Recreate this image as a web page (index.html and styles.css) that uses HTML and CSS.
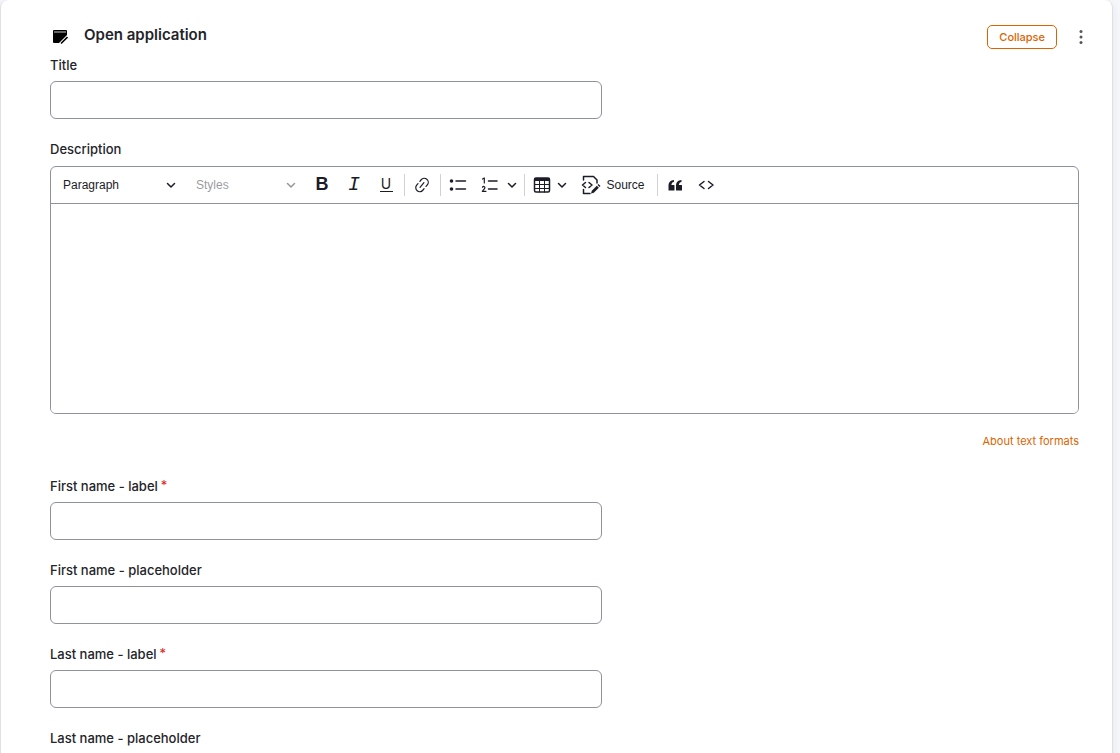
FILE: index.html
```html
<!DOCTYPE html>
<html lang="en">
<head>
<meta charset="utf-8">
<meta name="viewport" content="width=device-width, initial-scale=1">
<title>Open application</title>
<link rel="stylesheet" href="styles.css">
</head>
<body>
<main class="page">
  <form class="card">
    <header class="card-header">
      <svg class="card-icon" width="16" height="16" viewBox="0 0 16 16" aria-hidden="true">
        <path d="M1 2Q1 1 2 1H14Q15 1 15 2V6L7 14H2Q1 14 1 13Z" fill="#000"/>
        <path d="M2 3H14" stroke="#ccc" stroke-width="1"/>
        <path d="M9 14.500L15.500 8" stroke="#000" stroke-width="1.600"/>
      </svg>
      <h1 class="card-title">Open application</h1>
      <button class="collapse" type="button">Collapse</button>
      <button class="more" type="button" aria-label="More actions">
        <svg width="16" height="16" viewBox="0 0 16 16" fill="#55565b"><circle cx="8" cy="2.500" r="1.500"/><circle cx="8" cy="8" r="1.500"/><circle cx="8" cy="13.500" r="1.500"/></svg>
      </button>
    </header>

    <div class="field">
      <label class="label" for="title">Title</label>
      <input class="input" id="title" type="text">
    </div>

    <div class="field field-editor">
      <label class="label" for="description">Description</label>
      <div class="editor">
        <div class="toolbar" role="toolbar" aria-label="Editor toolbar">
          <div class="picker">
            <select class="picker-select picker-heading" aria-label="Heading"><option>Paragraph</option></select>
            <svg class="picker-arrow" width="10" height="10" viewBox="0 0 10 10"><path class="line" d="M1.500 3.500L5 7L8.500 3.500"/></svg>
          </div>
          <div class="picker picker-disabled">
            <select class="picker-select picker-styles" aria-label="Styles" disabled><option>Styles</option></select>
            <svg class="picker-arrow" width="10" height="10" viewBox="0 0 10 10"><path class="line" d="M1.500 3.500L5 7L8.500 3.500"/></svg>
          </div>
          <button class="tool tool-bold" type="button" aria-label="Bold">B</button>
          <button class="tool tool-italic" type="button" aria-label="Italic">I</button>
          <button class="tool" type="button" aria-label="Underline"><span class="tool-underline">U</span></button>
          <span class="divider"></span>
          <button class="tool" type="button" aria-label="Link">
            <svg width="18" height="18" viewBox="0 0 18 18"><g class="line thin" transform="rotate(-50 9 9)"><path d="M7.500 5H5.500a4 4 0 0 0 0 8H7.500M10.500 5h2a4 4 0 0 1 0 8h-2M6 9h6"/></g></svg>
          </button>
          <span class="divider"></span>
          <button class="tool" type="button" aria-label="Bulleted list">
            <svg width="18" height="18" viewBox="0 0 18 18"><g fill="#1b1c28"><circle cx="2.500" cy="5" r="1.800"/><circle cx="2.500" cy="13" r="1.800"/></g><path class="line" d="M7 5h9.500M7 13h9.500"/></svg>
          </button>
          <div class="split">
            <button class="tool" type="button" aria-label="Numbered list">
              <svg width="18" height="18" viewBox="0 0 18 18"><path class="line thin" d="M1.500 3L3.300 2V7M1.500 11.300Q2 10.300 3 10.500Q4.500 11 3.500 12.700L1.300 15.300H5"/><path class="line" d="M7.500 5H16M7.500 13H16"/></svg>
            </button>
            <button class="split-arrow" type="button" aria-label="Numbered list options"><svg width="10" height="10" viewBox="0 0 10 10"><path class="line" d="M1.500 3.500L5 7L8.500 3.500"/></svg></button>
          </div>
          <span class="divider"></span>
          <button class="tool tool-table" type="button" aria-label="Insert table">
            <svg width="18" height="18" viewBox="0 0 18 18"><rect x="1.500" y="2" width="15" height="14" rx="1.500" class="line"/><path d="M1.500 2h15v3h-15z" fill="#1b1c28"/><path class="line hair" d="M6.500 5v11M11.500 5v11M2 8.500h14M2 12.500h14"/></svg>
            <svg width="10" height="10" viewBox="0 0 10 10"><path class="line" d="M1.500 3.500L5 7L8.500 3.500"/></svg>
          </button>
          <button class="tool tool-source" type="button">
            <svg width="20" height="20" viewBox="0 0 20 20"><path class="line" d="M2.500 5V1.500H12.500L16 5V8M2.500 14.500V18.500H9"/><path class="line" d="M4.500 7.500L1.500 10L4.500 12.500M8 7.500L11 10L8 12.500"/><path d="M10 18.500l.800-2.800 5-5 2 2-5 5z" fill="#1b1c28"/><path d="M16.500 10l1-1 2 2-1 1z" fill="#1b1c28"/></svg>
            <span>Source</span>
          </button>
          <span class="divider"></span>
          <button class="tool" type="button" aria-label="Block quote">
            <svg width="18" height="18" viewBox="0 0 18 18" fill="#1b1c28"><path id="quote" d="M8 4C4.500 4.200 2.500 6.500 2.500 10V14q0 .500 .500 .500H8q.500 0 .500-.500V9.500Q8.500 9 8 9H5.300Q5.500 6.200 8 5.700Z"/><use href="#quote" x="7.500"/></svg>
          </button>
          <button class="tool" type="button" aria-label="Code">
            <svg width="18" height="18" viewBox="0 0 18 18"><path class="line" d="M6 5.500L1.500 9L6 12.500M10.500 5.500L15 9L10.500 12.500"/></svg>
          </button>
        </div>
        <textarea class="editor-area" id="description"></textarea>
      </div>
      <a class="formats" href="#formats">About text formats</a>
    </div>

    <div class="field">
      <label class="label required" for="first-label">First name - label</label>
      <input class="input" id="first-label" type="text" required>
    </div>
    <div class="field">
      <label class="label" for="first-placeholder">First name - placeholder</label>
      <input class="input" id="first-placeholder" type="text">
    </div>
    <div class="field">
      <label class="label required" for="last-label">Last name - label</label>
      <input class="input" id="last-label" type="text" required>
    </div>
    <div class="field">
      <label class="label" for="last-placeholder">Last name - placeholder</label>
      <input class="input" id="last-placeholder" type="text">
    </div>
  </form>
</main>
</body>
</html>
```
FILE: styles.css
```css
* { box-sizing: border-box; }

body {
  margin: 0;
  background: #f6f7fb;
  color: #232429;
  font-family: Inter, "Liberation Sans", sans-serif;
}

button, input, select, textarea { font: inherit; color: inherit; }

.page {
  height: 100vh;
  overflow: hidden;
  padding-right: 7px;
}

.card {
  display: flex;
  flex-direction: column;
  gap: 20px;
  padding: 25px 33px 40px 49px;
  background: #fff;
  border: 1px solid #e0e0e4;
  border-top: 0;
  border-radius: 8px;
  box-shadow: 0 2px 8px rgba(34, 35, 48, 0.08);
}

.card-header {
  display: flex;
  align-items: flex-start;
  height: 30px;
  margin-bottom: -20px;
}

.card-icon { margin: 4px 16px 0 2px; }

.card-title {
  flex: 1;
  margin: 0;
  font-size: 15px;
  line-height: 20px;
  font-weight: 600;
}

.collapse {
  height: 24px;
  padding: 0 11px;
  background: #fff;
  border: 1px solid #d96500;
  border-radius: 5px;
  color: #d96500;
  font-size: 11px;
  font-weight: 500;
}

.more {
  display: grid;
  place-items: center;
  width: 24px;
  height: 24px;
  margin: 0 -14px 0 12px;
  padding: 0;
  background: none;
  border: 0;
}

.field {
  display: flex;
  flex-direction: column;
  gap: 6px;
}

.label {
  align-self: flex-start;
  font-size: 13px;
  line-height: 20px;
  font-weight: 500;
}

.required::after {
  content: "*";
  margin-left: 3px;
  color: #d72222;
  font-weight: 400;
  line-height: 1;
  vertical-align: 1px;
}

.input {
  width: 100%;
  max-width: 552px;
  height: 38px;
  padding: 0 15px;
  background: #fff;
  border: 1px solid #8e929c;
  border-radius: 6px;
}

.field-editor { gap: 7px; margin-bottom: 7px; }

.editor {
  overflow: hidden;
  border: 1px solid #8e929c;
  border-radius: 6px;
}

.toolbar {
  display: flex;
  align-items: center;
  gap: 4px;
  height: 37px;
  padding: 0 4px 1px;
  border-bottom: 1px solid #8e929c;
  color: #1b1c28;
  font-family: "Liberation Sans", sans-serif;
  font-size: 12px;
}

.picker {
  display: grid;
  align-items: center;
}

.picker-select {
  grid-area: 1 / 1;
  height: 28px;
  padding: 0 8px;
  appearance: none;
  background: none;
  border: 0;
}

.picker-heading { width: 129px; }
.picker-styles { width: 116px; }

.picker-arrow {
  grid-area: 1 / 1;
  justify-self: end;
  margin-right: 8px;
  pointer-events: none;
}

.picker-disabled { opacity: 0.45; }
.picker-disabled .picker-select { opacity: 1; }

.tool {
  display: flex;
  align-items: center;
  justify-content: center;
  width: 28px;
  height: 28px;
  padding: 0;
  background: none;
  border: 0;
}

.tool-bold {
  font-family: "Liberation Sans", sans-serif;
  font-size: 18px;
  font-weight: 700;
}

.tool-italic {
  font-family: "Liberation Mono", monospace;
  font-size: 20px;
  font-style: italic;
}

.tool-underline {
  width: 13px;
  border-bottom: 1px solid #1b1c28;
  font-family: Inter, sans-serif;
  font-size: 14px;
  line-height: 14px;
}

.line {
  fill: none;
  stroke: #1b1c28;
  stroke-width: 1.5;
  stroke-linecap: round;
  stroke-linejoin: round;
}

.thin { stroke-width: 1.2; }
.hair { stroke-width: 1; }

.divider {
  width: 1px;
  height: 22px;
  margin-right: -1px;
  background: #d0d1d6;
}

.split { display: flex; }

.split-arrow {
  display: grid;
  place-items: center;
  width: 16px;
  padding: 0;
  background: none;
  border: 0;
}

.tool-table { width: 44px; gap: 6px; }

.tool-source {
  width: 77px;
  padding-right: 3px;
  gap: 5px;
}

.editor-area {
  display: block;
  width: 100%;
  height: 209px;
  padding: 10px;
  border: 0;
  outline: 0;
  resize: none;
}

.formats {
  align-self: flex-end;
  margin-top: 12px;
  color: #d96500;
  font-size: 11px;
  line-height: 16px;
  text-decoration: none;
}
```
